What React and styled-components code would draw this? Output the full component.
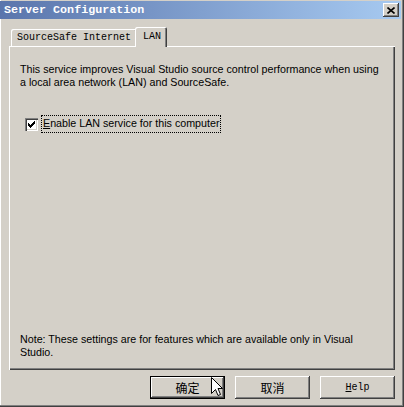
import React from 'react'
import styled, { createGlobalStyle } from 'styled-components'

const Global = createGlobalStyle`
  html, body {
    margin: 0;
    padding: 0;
    background: #d4d0c8;
  }
  * { box-sizing: border-box; }
`

const Window = styled.div`
  position: relative;
  width: 404px;
  height: 407px;
  background: #d4d0c8;
  padding: 1px 3px 3px 0;
  display: flex;
  flex-direction: column;
  box-shadow: inset -1px -1px #404040, inset -2px -2px #808080, inset 1px 0 #fff;
  font-family: "Liberation Sans", Arial, sans-serif;
  font-size: 10.7px;
  color: #000;
`

const TitleBar = styled.div`
  height: 18px;
  display: flex;
  align-items: center;
  justify-content: space-between;
  padding: 0 2px 0 4px;
  background: linear-gradient(to right, #5a75ac, #a7caf1);
`

const Title = styled.span`
  color: #fff;
  font-family: "Liberation Mono", "Courier New", monospace;
  font-weight: bold;
  font-size: 11.7px;
`

const CloseButton = styled.div`
  width: 16px;
  height: 14px;
  background: #d4d0c8;
  box-shadow: inset -1px -1px #404040, inset 1px 1px #fff, inset -2px -2px #808080;
  display: flex;
  align-items: center;
  justify-content: center;
`

const Body = styled.div`
  flex: 1;
  display: flex;
  flex-direction: column;
  padding: 8px 6px 0 9px;
`

const TabStrip = styled.div`
  display: flex;
  align-items: flex-end;
  padding-left: 2px;
  height: 19px;
`

const Tab = styled.div`
  position: relative;
  z-index: ${p => (p.$active ? 2 : 1)};
  height: ${p => (p.$active ? '20px' : '17px')};
  margin: ${p => (p.$active ? '0 0 -1px -2px' : '0')};
  padding: ${p => (p.$active ? '3px 6px 0 8px' : '2px 6px 0 6px')};
  background: #d4d0c8;
  border-top-left-radius: 2px;
  border-top-right-radius: 2px;
  box-shadow: inset 1px 1px #fff, inset -1px 0 #404040, inset -2px 0 #808080;
  font-family: "Liberation Mono", "Courier New", monospace;
  font-size: 10px;
  line-height: 13px;
  white-space: nowrap;
`

const Panel = styled.div`
  height: 324px;
  display: flex;
  flex-direction: column;
  padding: 17px 10px 11px 11px;
  box-shadow: inset 1px 1px #fff, inset -1px -1px #404040, inset -2px -2px #808080;
`

const Para = styled.p`
  margin: 0;
  line-height: 13px;
  white-space: nowrap;
`

const CheckRow = styled.label`
  display: flex;
  align-items: center;
  margin-top: 27px;
  margin-left: 5px;
`

const CheckBox = styled.span`
  width: 13px;
  height: 13px;
  background: #fff;
  box-shadow: inset 1px 1px #808080, inset 2px 2px #404040, inset -1px -1px #fff, inset -2px -2px #d4d0c8;
  display: flex;
  align-items: center;
  justify-content: center;
`

const FocusLabel = styled.span`
  margin-left: 4px;
  padding: 1px 1px 2px 1px;
  outline: 1px dotted #000;
  line-height: 13px;
  white-space: nowrap;
`

const Note = styled(Para)`
  margin-top: auto;
`

const ButtonRow = styled.div`
  display: flex;
  justify-content: flex-end;
  gap: 10px;
  padding-top: 6px;
`

const Button = styled.div`
  width: 75px;
  height: 23px;
  display: flex;
  align-items: center;
  justify-content: center;
  background: #d4d0c8;
  box-shadow: ${p =>
    p.$default
      ? 'inset 0 0 0 1px #000, inset -2px -2px #404040, inset 2px 2px #fff, inset -3px -3px #808080'
      : 'inset -1px -1px #404040, inset 1px 1px #fff, inset -2px -2px #808080'};
  font-family: ${p =>
    p.$mono
      ? '"Liberation Mono", "Courier New", monospace'
      : '"Noto Sans CJK SC", "Liberation Sans", sans-serif'};
  font-size: ${p => (p.$mono ? '10px' : '12px')};
`

const Cursor = styled.svg`
  position: absolute;
  left: 211px;
  top: 377px;
  z-index: 5;
`

export default function App() {
  return (
    <>
      <Global />
      <Window>
        <TitleBar>
          <Title>Server Configuration</Title>
          <CloseButton>
            <svg width="8" height="7" viewBox="0 0 8 7">
              <path d="M0.5 0.5 L7.5 6.5 M7.5 0.5 L0.5 6.5" stroke="#000" strokeWidth="1.6" />
            </svg>
          </CloseButton>
        </TitleBar>
        <Body>
          <TabStrip>
            <Tab>SourceSafe Internet</Tab>
            <Tab $active>LAN</Tab>
          </TabStrip>
          <Panel>
            <Para>
              This service improves Visual Studio source control performance when using
              <br />a local area network (LAN) and SourceSafe.
            </Para>
            <CheckRow>
              <CheckBox>
                <svg width="7" height="7" viewBox="0 0 7 7" shapeRendering="crispEdges">
                  <path d="M0 2h1v3h-1z M1 3h1v3h-1z M2 4h1v3h-1z M3 3h1v3h-1z M4 2h1v3h-1z M5 1h1v3h-1z M6 0h1v3h-1z" fill="#000" />
                </svg>
              </CheckBox>
              <FocusLabel>
                <u>E</u>nable LAN service for this computer
              </FocusLabel>
            </CheckRow>
            <Note>
              Note: These settings are for features which are available only in Visual
              <br />Studio.
            </Note>
          </Panel>
          <ButtonRow>
            <Button $default>确定</Button>
            <Button>取消</Button>
            <Button $mono>
              <u>H</u>elp
            </Button>
          </ButtonRow>
        </Body>
        <Cursor width="12" height="20" viewBox="0 0 12 20">
          <path d="M0.5 0.5 L0.5 16.5 L4.5 12.5 L7 18.5 L9.5 17.5 L7 11.5 L11.5 11.5 Z" fill="#fff" stroke="#000" strokeWidth="1" />
        </Cursor>
      </Window>
    </>
  )
}
